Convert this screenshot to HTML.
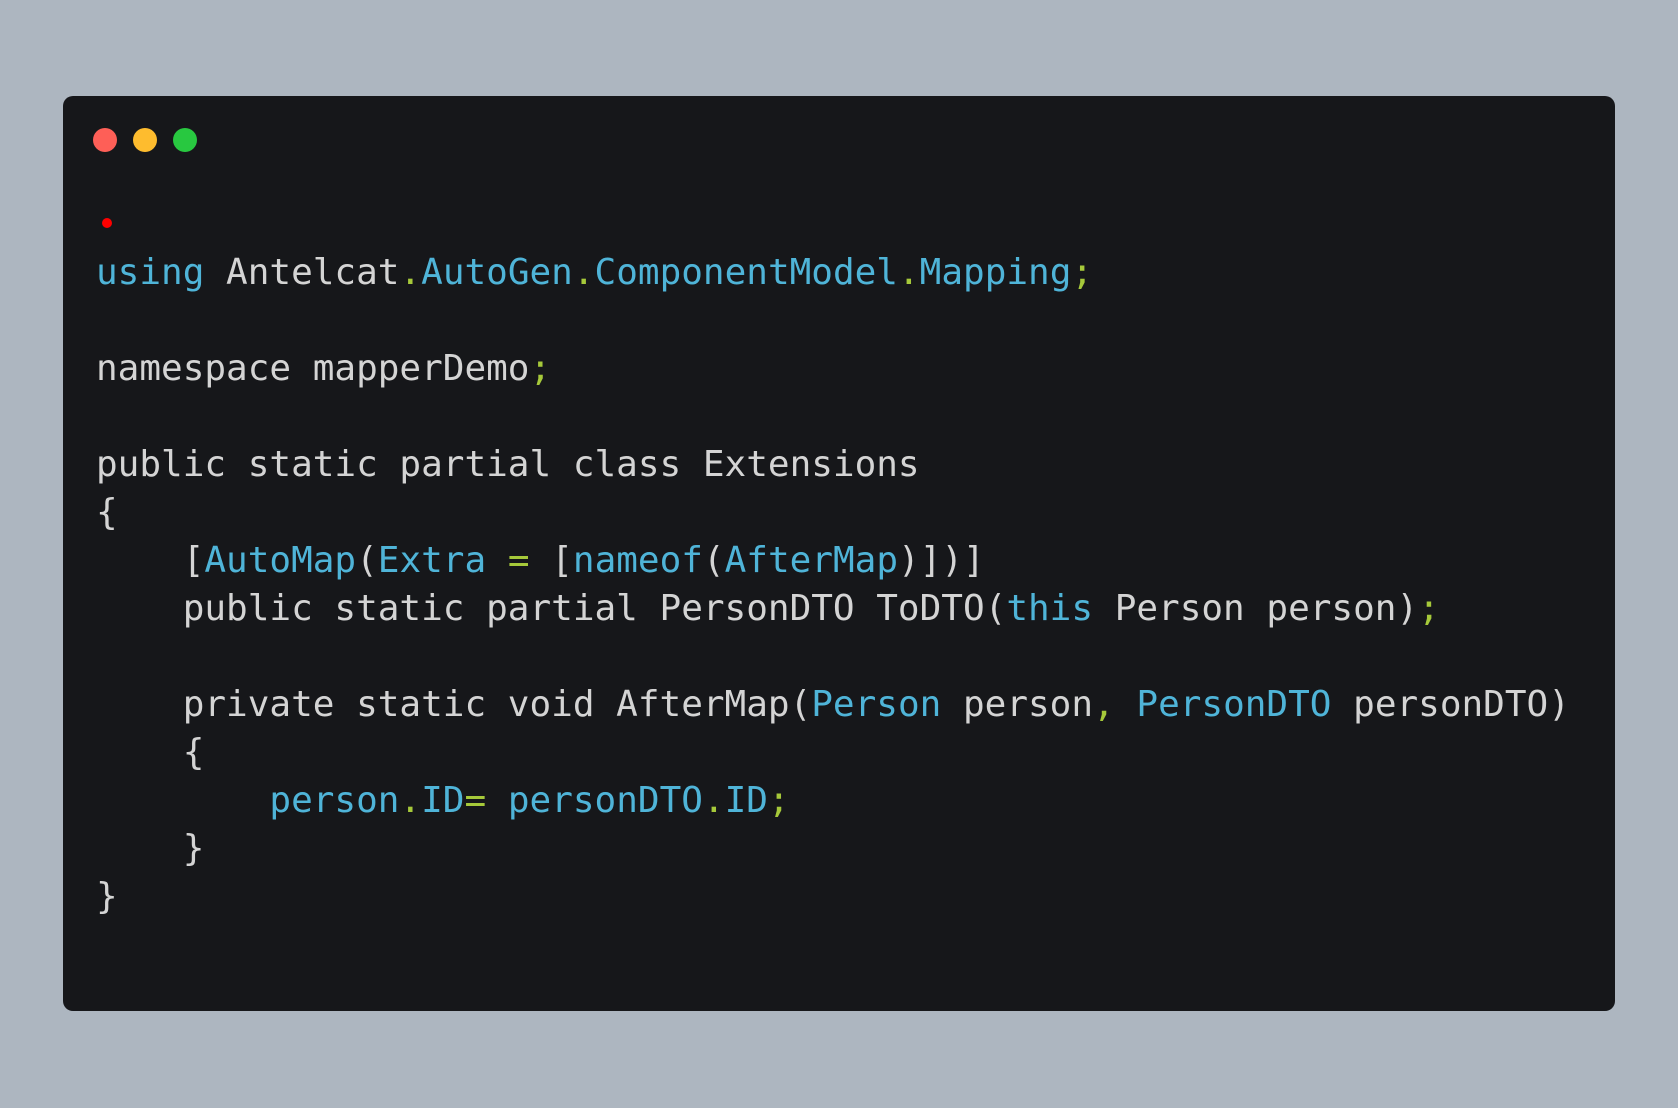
<!DOCTYPE html>
<html><head><meta charset="utf-8"><style>
html,body{margin:0;padding:0;}
body{width:1678px;height:1108px;background:#adb6c0;position:relative;overflow:hidden;}
.card{position:absolute;left:63px;top:96px;width:1552px;height:915px;background:#16171a;border-radius:10px;}
.d{position:absolute;width:24px;height:24px;border-radius:50%;top:128px;}
pre{position:absolute;left:96px;top:249px;margin:0;font-family:"DejaVu Sans Mono","Liberation Mono",monospace;font-size:36px;line-height:48px;color:#d4d4d4;}
.b{color:#4fb4d8}.g{color:#a6c93a}
</style></head><body>
<div class="card"></div>
<div class="d" style="left:93px;background:#fe5f57"></div>
<div class="d" style="left:133px;background:#febc2e"></div>
<div class="d" style="left:173px;background:#28c840"></div>
<div style="position:absolute;left:102px;top:218px;width:10px;height:10px;border-radius:50%;background:#f00"></div>
<pre><span class="b">using</span> Antelcat<span class="g">.</span><span class="b">AutoGen</span><span class="g">.</span><span class="b">ComponentModel</span><span class="g">.</span><span class="b">Mapping</span><span class="g">;</span>

namespace mapperDemo<span class="g">;</span>

public static partial class Extensions
{
    [<span class="b">AutoMap</span>(<span class="b">Extra</span> <span class="g">=</span> [<span class="b">nameof</span>(<span class="b">AfterMap</span>)])]
    public static partial PersonDTO ToDTO(<span class="b">this</span> Person person)<span class="g">;</span>

    private static void AfterMap(<span class="b">Person</span> person<span class="g">,</span> <span class="b">PersonDTO</span> personDTO)
    {
        <span class="b">person</span><span class="g">.</span><span class="b">ID</span><span class="g">=</span> <span class="b">personDTO</span><span class="g">.</span><span class="b">ID</span><span class="g">;</span>
    }
}
</pre>
</body></html>
